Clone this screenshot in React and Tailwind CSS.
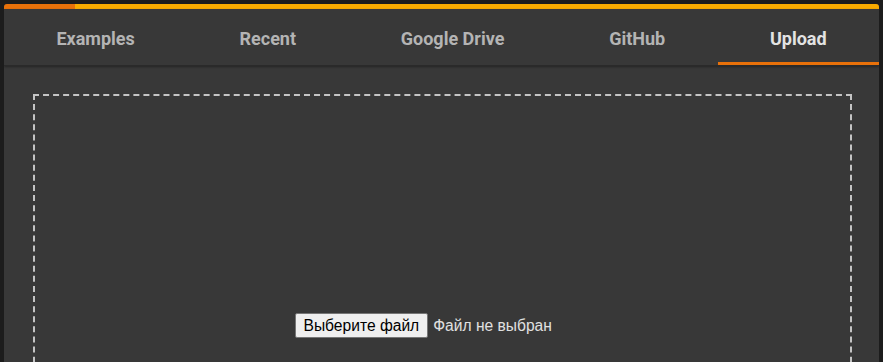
import React from 'react';

const tabs = ['Examples', 'Recent', 'Google Drive', 'GitHub', 'Upload'];

export default function App() {
  return (
    <div className="w-[883px] h-[362px] overflow-hidden bg-[#1c1c1c] pt-[4px] px-[4px]" style={{ fontFamily: 'Roboto, "Liberation Sans", sans-serif' }}>
      <div className="h-full rounded-t-[3px] overflow-hidden bg-[#383838] flex flex-col">
        {/* progress bar */}
        <div className="h-[5px] flex shrink-0">
          <div className="w-[71px] bg-[#e8710a]" />
          <div className="flex-1 bg-[#f9ab00]" />
        </div>

        {/* tabs */}
        <div className="flex h-[57px] shrink-0 border-b border-[#2a2a2a] shadow-[0_1px_2px_rgba(0,0,0,0.35)] relative z-10">
          {tabs.map((t) => (
            <div
              key={t}
              className={
                'flex-auto flex items-center justify-center text-[18px] font-bold border-b-[3px] pt-[5px] ' +
                (t === 'Upload' ? 'text-[#e3e3e3] border-[#e8710a]' : 'text-[#b4b4b4] border-transparent')
              }
            >
              {t}
            </div>
          ))}
        </div>

        {/* drop zone */}
        <div className="flex-1 pt-[28px] pl-[29px] pr-[27px]">
          <div className="h-[400px] border-2 border-dashed border-[#c4c4c4] flex justify-center pt-[217px]">
            <div className="w-[296px] flex items-center gap-[5px] h-[25px]" style={{ fontFamily: '"Liberation Sans", Arial, sans-serif' }}>
              <button className="h-[25px] px-[8px] bg-[#efefef] border border-[#767676] rounded-[2px] text-[15.6px] text-black leading-none">
                Выберите файл
              </button>
              <span className="text-[15.6px] text-[#e0e0e0]">Файл не выбран</span>
            </div>
          </div>
        </div>
      </div>
    </div>
  );
}
